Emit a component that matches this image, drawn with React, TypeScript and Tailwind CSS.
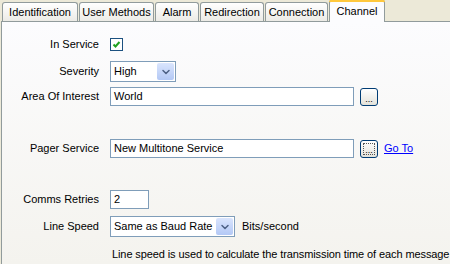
import { ChevronDown } from 'lucide-react'

const tabs = [
  { label: 'Identification', w: 'w-[76px]' },
  { label: 'User Methods', w: 'w-[75px]' },
  { label: 'Alarm', w: 'w-[44px]' },
  { label: 'Redirection', w: 'w-[64px]' },
  { label: 'Connection', w: 'w-[63px]' },
]

function Label({ children }: { children: React.ReactNode }) {
  return <div className="w-[98px] shrink-0 pr-[1px] text-right">{children}</div>
}

function Select({ value, w }: { value: string; w: string }) {
  return (
    <div className={`flex h-[21px] ${w} items-center border border-[#7f9db9] bg-white pl-[3px]`}>
      <span className="flex-1">{value}</span>
      <span className="m-[1px] flex h-[17px] w-[17px] items-center justify-center rounded-[2px] bg-gradient-to-b from-[#dae5fd] to-[#b3c8f5]">
        <ChevronDown size={12} strokeWidth={3} className="text-[#4d6185]" />
      </span>
    </div>
  )
}

function Browse({ focused }: { focused?: boolean }) {
  return (
    <div className="ml-[6px] flex h-[18px] w-[18px] items-end justify-center rounded-[3px] border border-[#003c74] bg-gradient-to-b from-white to-[#e3e2da] pb-[2px]">
      <span
        className={`flex h-[12px] w-[12px] items-end justify-center text-[9px] leading-[8px] ${
          focused ? 'border border-dotted border-[#555]' : ''
        }`}
      >
        ...
      </span>
    </div>
  )
}

export default function App() {
  return (
    <div className="h-[264px] w-[450px] overflow-hidden bg-[#ece9d8] text-[11px] text-black [font-family:'Liberation_Sans',Arial,sans-serif]">
      <div className="flex h-[21px] items-end pl-[2px]">
        {tabs.map((t) => (
          <div
            key={t.label}
            className={`${t.w} mr-[1px] flex h-[19px] items-center justify-center rounded-t-[3px] border border-b-0 border-[#919b9c] bg-gradient-to-b from-white to-[#ecebe6]`}
          >
            {t.label}
          </div>
        ))}
        <div className="relative z-10 -mb-[1px] flex h-[22px] w-[56px] flex-col rounded-t-[3px] border border-b-0 border-[#919b9c] bg-[#fcfcfe]">
          <div className="-mx-[1px] -mt-[1px] h-[2px] rounded-t-[3px] bg-[#ffc83c]" />
          <div className="flex flex-1 items-start justify-center pt-[1px]">Channel</div>
        </div>
      </div>
      <div className="ml-[1px] flex h-[243px] flex-col border-t border-l border-[#919b9c] bg-gradient-to-b from-[#fcfcfe] to-[#f4f3ee] pt-[15px]">
        <div className="flex h-[14px] items-center">
          <Label>In Service</Label>
          <div className="ml-[10px] flex h-[13px] w-[13px] items-center justify-center border border-[#1c5180] bg-white">
            <svg width="9" height="9" viewBox="0 0 9 9">
              <path d="M1.5 4.5 L3.5 6.5 L7.5 2" fill="none" stroke="#21a121" strokeWidth="2" />
            </svg>
          </div>
        </div>
        <div className="mt-[10px] flex items-center">
          <Label>Severity</Label>
          <div className="ml-[10px]">
            <Select value="High" w="w-[66px]" />
          </div>
        </div>
        <div className="mt-[5px] flex items-center">
          <Label>Area Of Interest</Label>
          <div className="ml-[10px] flex h-[19px] w-[244px] items-center border border-[#7f9db9] bg-white pl-[3px]">World</div>
          <Browse />
        </div>
        <div className="mt-[33px] flex items-center">
          <Label>Pager Service</Label>
          <div className="ml-[10px] flex h-[19px] w-[244px] items-center border border-[#7f9db9] bg-white pl-[3px]">
            New Multitone Service
          </div>
          <Browse focused />
          <span className="ml-[6px] text-[#0000ff] underline">Go To</span>
        </div>
        <div className="mt-[32px] flex items-center">
          <Label>Comms Retries</Label>
          <div className="ml-[10px] flex h-[19px] w-[39px] items-center border border-[#7f9db9] bg-white pl-[3px]">2</div>
        </div>
        <div className="mt-[7px] flex items-center">
          <Label>Line Speed</Label>
          <div className="ml-[10px]">
            <Select value="Same as Baud Rate" w="w-[125px]" />
          </div>
          <span className="ml-[7px]">Bits/second</span>
        </div>
        <div className="mt-[9px] whitespace-nowrap pl-[110px] tracking-[-0.1px]">
          Line speed is used to calculate the transmission time of each message
        </div>
      </div>
    </div>
  )
}
